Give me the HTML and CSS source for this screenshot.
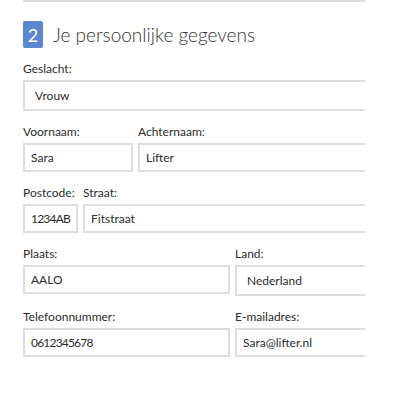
FILE: index.html
```html
<!DOCTYPE html>
<html lang="nl">
<head>
<meta charset="utf-8">
<link rel="stylesheet" href="styles.css">
</head>
<body>
<div class="page">
  <div class="inner">
    <div class="heading">
      <span class="badge">2</span>
      <h2 class="title">Je persoonlijke gegevens</h2>
    </div>

    <div class="row">
      <div class="field">
        <label class="label">Geslacht:</label>
        <div class="box select tall">Vrouw</div>
      </div>
    </div>

    <div class="row cols-name">
      <div class="field">
        <label class="label">Voornaam:</label>
        <div class="box">Sara</div>
      </div>
      <div class="field">
        <label class="label">Achternaam:</label>
        <div class="box">Lifter</div>
      </div>
    </div>

    <div class="row cols-street">
      <div class="field">
        <label class="label">Postcode:</label>
        <div class="box num">1234AB</div>
      </div>
      <div class="field">
        <label class="label">Straat:</label>
        <div class="box">Fitstraat</div>
      </div>
    </div>

    <div class="row cols-half">
      <div class="field">
        <label class="label">Plaats:</label>
        <div class="box">AALO</div>
      </div>
      <div class="field">
        <label class="label">Land:</label>
        <div class="box select tall">Nederland</div>
      </div>
    </div>

    <div class="row cols-half">
      <div class="field">
        <label class="label">Telefoonnummer:</label>
        <div class="box num">0612345678</div>
      </div>
      <div class="field">
        <label class="label">E-mailadres:</label>
        <div class="box">Sara@lifter.nl</div>
      </div>
    </div>
  </div>
</div>
</body>
</html>
```

FILE: styles.css
```css
html, body {
  margin: 0;
  padding: 0;
  background: #ffffff;
}

body {
  font-family: Lato, "Noto Sans", sans-serif;
  color: #2b2b2b;
}

.page {
  margin-left: 23px;
  width: 342px;
  height: 400px;
  overflow: hidden;
  border-top: 2px solid #dddddd;
  box-sizing: border-box;
}

.inner {
  width: 419px;
  padding-top: 19px;
}

.heading {
  display: flex;
  align-items: center;
  gap: 10px;
  height: 27px;
}

.badge {
  display: flex;
  align-items: center;
  justify-content: center;
  width: 20px;
  height: 27px;
  background: #5a87cf;
  color: #ffffff;
  border-radius: 2px;
  font-size: 18px;
  font-weight: 400;
}

.title {
  margin: 0;
  font-size: 19px;
  font-weight: 300;
  color: #333333;
  line-height: 27px;
}

.row {
  display: grid;
  gap: 5px;
  margin-top: 13px;
}

.cols-name {
  grid-template-columns: 110px 1fr;
}

.cols-street {
  grid-template-columns: 55px 1fr;
}

.cols-half {
  grid-template-columns: 207px 1fr;
}

.field {
  display: flex;
  flex-direction: column;
  align-items: stretch;
  min-width: 0;
}

.label {
  display: block;
  font-size: 12px;
  line-height: 16px;
  height: 16px;
  margin-bottom: 3px;
  color: #2b2b2b;
}

.box {
  box-sizing: border-box;
  height: 29px;
  border: 2px solid #dddddd;
  padding: 0 6px;
  font-size: 12px;
  line-height: 25px;
  color: #2b2b2b;
  white-space: nowrap;
  overflow: hidden;
}

.num {
  letter-spacing: -0.8px;
}

.select {
  padding-left: 10px;
}

.tall {
  height: 31px;
  line-height: 27px;
}
```
